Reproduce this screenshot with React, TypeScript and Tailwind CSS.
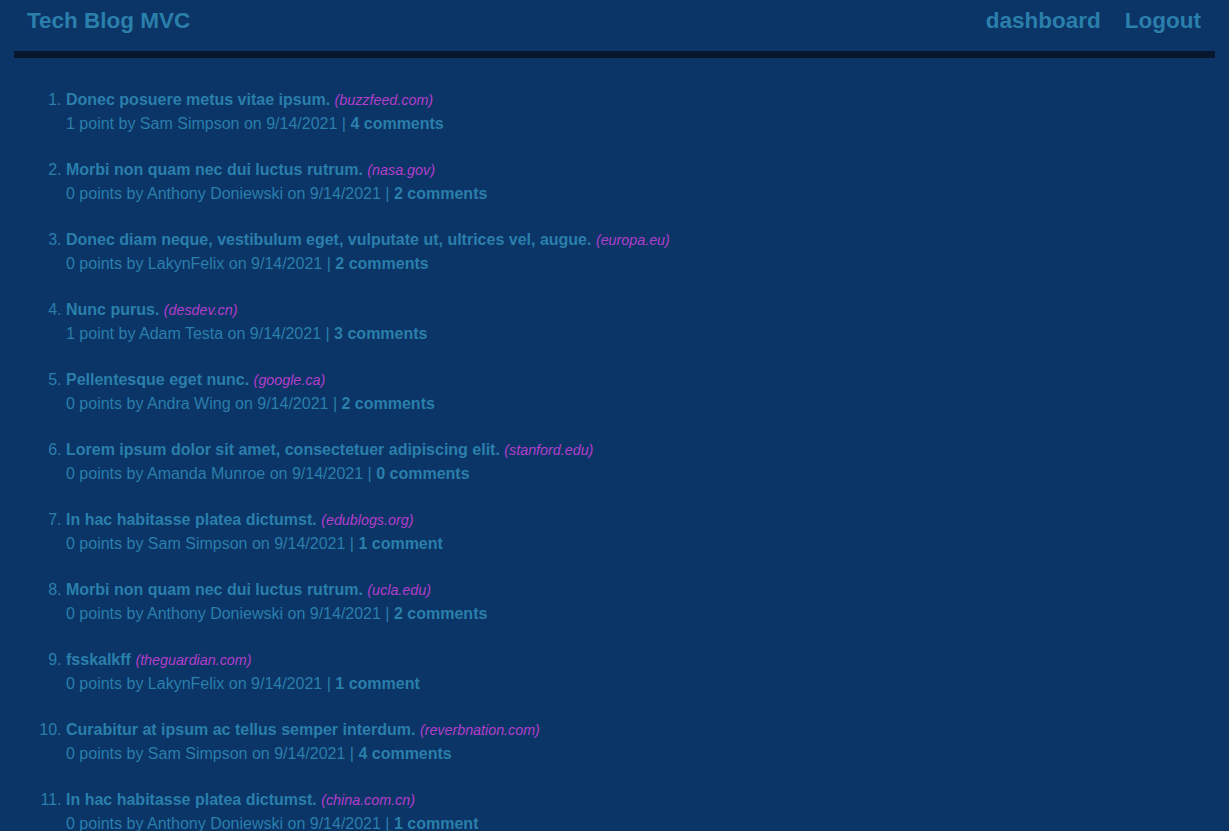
import React from "react";

type Post = {
  title: string;
  site: string;
  points: number;
  author: string;
  comments: number;
};

const posts: Post[] = [
  { title: "Donec posuere metus vitae ipsum.", site: "buzzfeed.com", points: 1, author: "Sam Simpson", comments: 4 },
  { title: "Morbi non quam nec dui luctus rutrum.", site: "nasa.gov", points: 0, author: "Anthony Doniewski", comments: 2 },
  { title: "Donec diam neque, vestibulum eget, vulputate ut, ultrices vel, augue.", site: "europa.eu", points: 0, author: "LakynFelix", comments: 2 },
  { title: "Nunc purus.", site: "desdev.cn", points: 1, author: "Adam Testa", comments: 3 },
  { title: "Pellentesque eget nunc.", site: "google.ca", points: 0, author: "Andra Wing", comments: 2 },
  { title: "Lorem ipsum dolor sit amet, consectetuer adipiscing elit.", site: "stanford.edu", points: 0, author: "Amanda Munroe", comments: 0 },
  { title: "In hac habitasse platea dictumst.", site: "edublogs.org", points: 0, author: "Sam Simpson", comments: 1 },
  { title: "Morbi non quam nec dui luctus rutrum.", site: "ucla.edu", points: 0, author: "Anthony Doniewski", comments: 2 },
  { title: "fsskalkff", site: "theguardian.com", points: 0, author: "LakynFelix", comments: 1 },
  { title: "Curabitur at ipsum ac tellus semper interdum.", site: "reverbnation.com", points: 0, author: "Sam Simpson", comments: 4 },
  { title: "In hac habitasse platea dictumst.", site: "china.com.cn", points: 0, author: "Anthony Doniewski", comments: 1 },
];

export default function App() {
  return (
    <div className="min-h-screen bg-[#0b3467] font-['Liberation_Sans',Arial,sans-serif] text-[#2a7fab]">
      <header className="flex h-[51px] items-start justify-between pl-[27px] pr-[28px] pt-[7px]">
        <h1 className="text-[22.5px] font-bold leading-[28px]">Tech Blog MVC</h1>
        <nav className="flex gap-[24px] text-[22.5px] font-bold leading-[28px]">
          <a href="#">dashboard</a>
          <a href="#">Logout</a>
        </nav>
      </header>
      <div className="mx-[14px] h-[7px] bg-[#06172d]" />

      <ol className="list-outside list-decimal pl-[66px] pt-[30px] text-[16px] leading-[24px]">
        {posts.map((p, i) => (
          <li key={i} className="mb-[22px]">
            <div>
              <a href="#" className="font-bold">{p.title}</a>{" "}
              <span className="text-[14.3px] italic text-[#b33ecb]">({p.site})</span>
            </div>
            <div>
              {p.points} {p.points === 1 ? "point" : "points"} by {p.author} on 9/14/2021 |{" "}
              <a href="#" className="font-bold">
                {p.comments} {p.comments === 1 ? "comment" : "comments"}
              </a>
            </div>
          </li>
        ))}
      </ol>
    </div>
  );
}
